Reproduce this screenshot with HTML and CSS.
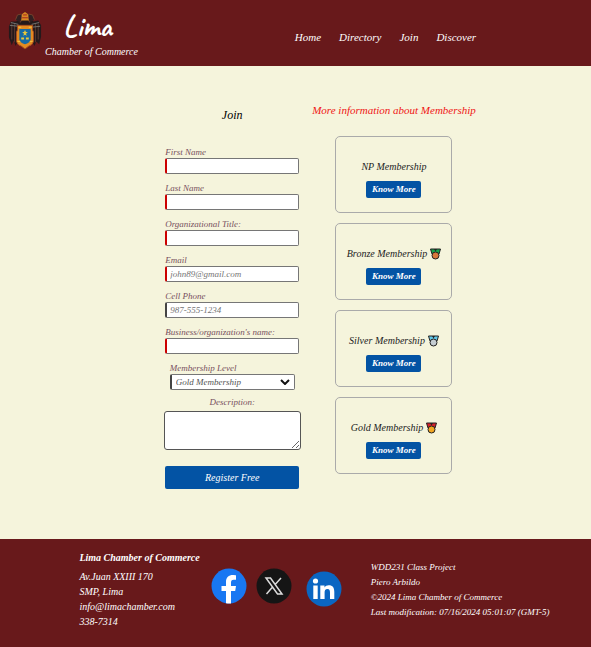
FILE: index.html
```html
<!DOCTYPE html>
<html lang="en">
<head>
<meta charset="utf-8">
<meta name="viewport" content="width=device-width, initial-scale=1">
<title>Join | Lima Chamber of Commerce</title>
<link rel="stylesheet" href="styles.css">
</head>
<body>
<header class="site-header">
  <svg class="crest" viewBox="0 0 36 40" aria-hidden="true">
    <path d="M14 8 8 10 3 10 1 15 1 27 4 35 6 30 8 36 11 30 17 35 25 30 28 36 30 31 33 34 35 26 35 14 32 9 27 10 22 7Z" fill="#24191b"/>
    <path d="M4 12v17M7 12v20M32 12v17M29 12v20" stroke="#5c3a31" stroke-width="1"/>
    <path d="m3 11 8 2M2 14l9 1M25 13l8-2M25 16l9-1" stroke="#777674" stroke-width="1"/>
    <path d="m8 8 2-5 4-1 1 5-2 4M28 8l-2-5-4-1-1 5 2 4" fill="#322022" stroke="#74432d"/>
    <path d="m14 9 1-7 3-2 3 2 1 7Z" fill="#d88a23"/>
    <path d="M16 3h4M15 6h6" stroke="#a62020"/>
    <path d="M10 14h16v5l1 2v10q-1 4-5 5l-4 3-4-3q-4-1-5-5V21l1-2Z" fill="#e38b21" stroke="#a84b1e"/>
    <path d="M12 18h12v11q-1 4-6 5-5-1-6-5Z" fill="#176aa5"/>
    <path d="m18 19 1 2h2l-2 2 1 2-2-1-2 1 1-2-2-2h2Z" fill="#e6c73c"/>
    <path d="M14 28h3m2 0h3" stroke="#e6c73c" stroke-width="2"/>
    <path d="M11 16h3m8 0h3M10 31h3m10 0h3" stroke="#f2cc48"/>
  </svg>
  <div class="brand">
    <h1 class="brand-name">Lima</h1>
    <p class="brand-sub">Chamber of Commerce</p>
  </div>
  <nav class="main-nav" aria-label="Main">
    <a href="#">Home</a>
    <a href="#">Directory</a>
    <a href="#">Join</a>
    <a href="#">Discover</a>
  </nav>
</header>

<main class="content">
  <form class="join-form" action="#">
    <h2 class="form-title">Join</h2>
    <div class="fields">
      <div class="field"><label for="first">First Name</label><input id="first" type="text" required></div>
      <div class="field"><label for="last">Last Name</label><input id="last" type="text" required></div>
      <div class="field"><label for="title">Organizational Title:</label><input id="title" type="text" required></div>
      <div class="field"><label for="email">Email</label><input id="email" type="email" placeholder="john89@gmail.com" required></div>
      <div class="field"><label for="phone">Cell Phone</label><input id="phone" type="tel" placeholder="987-555-1234"></div>
      <div class="field"><label for="business">Business/organization's name:</label><input id="business" type="text" required></div>
      <div class="field field-select">
        <label for="level">Membership Level</label>
        <div class="select-wrap">
          <select id="level">
            <option>Gold Membership</option>
            <option>Silver Membership</option>
            <option>Bronze Membership</option>
            <option>NP Membership</option>
          </select>
          <svg class="chevron" viewBox="0 0 10 6" aria-hidden="true"><path d="m1 1 4 4 4-4" fill="none" stroke="#111" stroke-width="2"/></svg>
        </div>
      </div>
    </div>
    <div class="description">
      <label for="description">Description:</label>
      <textarea id="description"></textarea>
    </div>
    <button class="register" type="submit">Register Free</button>
  </form>

  <section class="levels">
    <h2 class="levels-title">More information about Membership</h2>
    <article class="card">
      <h3>NP Membership</h3>
      <button type="button">Know More</button>
    </article>
    <article class="card">
      <h3>Bronze Membership
        <svg class="medal bronze" viewBox="0 0 11 12" aria-hidden="true"><path class="ribbon" d="M.5 1h10L9 6H2Z"/><path class="fold" d="m4 1 1.500 2.500L7 1Z"/><circle class="disc" cx="5.500" cy="7.500" r="3.500"/></svg>
      </h3>
      <button type="button">Know More</button>
    </article>
    <article class="card">
      <h3>Silver Membership
        <svg class="medal silver" viewBox="0 0 11 12" aria-hidden="true"><path class="ribbon" d="M.5 1h10L9 6H2Z"/><path class="fold" d="m4 1 1.500 2.500L7 1Z"/><circle class="disc" cx="5.500" cy="7.500" r="3.500"/></svg>
      </h3>
      <button type="button">Know More</button>
    </article>
    <article class="card">
      <h3>Gold Membership
        <svg class="medal gold" viewBox="0 0 11 12" aria-hidden="true"><path class="ribbon" d="M.5 1h10L9 6H2Z"/><path class="fold" d="m4 1 1.500 2.500L7 1Z"/><circle class="disc" cx="5.500" cy="7.500" r="3.500"/></svg>
      </h3>
      <button type="button">Know More</button>
    </article>
  </section>
</main>

<footer class="site-footer">
  <address class="contact">
    <h2>Lima Chamber of Commerce</h2>
    <p>Av.Juan XXIII 170</p>
    <p>SMP, Lima</p>
    <p>info@limachamber.com</p>
    <p>338-7314</p>
  </address>
  <div class="social">
    <a href="#" aria-label="Facebook">
      <svg viewBox="0 0 36 36"><circle cx="18" cy="18" r="17.500" fill="#1877f2"/><path d="M15 35.300V23h-4.500v-5H15v-4c0-4.700 2.700-7 6.900-7 1.500 0 3.100.3 3.100.3v4.400h-2.200c-2.200 0-2.800 1.300-2.800 2.700V18h5l-.8 5H20v12.400a18 18 0 0 1-5-.1Z" fill="#fff"/></svg>
    </a>
    <a href="#" aria-label="X">
      <svg viewBox="0 0 36 36"><circle cx="18" cy="18" r="17.500" fill="#151515"/><path d="M10 10h4.500l11.500 16h-4.500ZM25 10l-6.300 7M10.500 26l6.500-7.400" fill="none" stroke="#ddd" stroke-width="1.500"/></svg>
    </a>
    <a class="linkedin" href="#" aria-label="LinkedIn">
      <svg viewBox="0 0 36 36"><circle cx="18" cy="18" r="17.500" fill="#0a66c2"/><circle cx="9.500" cy="10" r="2.600" fill="#fff"/><path d="M7.300 14.500h4.400V28H7.300ZM14.300 14.500h4.200v1.900c.9-1.400 2.300-2.200 4.200-2.200 4.200 0 5.600 2.700 5.600 6.600V28H24v-6.200c0-2-.4-3.700-2.600-3.700s-2.800 1.600-2.800 3.700V28h-4.300Z" fill="#fff"/></svg>
    </a>
  </div>
  <div class="credits">
    <p>WDD231 Class Project</p>
    <p>Piero Arbildo</p>
    <p>©2024 Lima Chamber of Commerce</p>
    <p>Last modification: 07/16/2024 05:01:07 (GMT-5)</p>
  </div>
</footer>
</body>
</html>
```
FILE: styles.css
```css
:root {
  --maroon: #68191b;
  --cream: #f5f4dc;
  --blue: #0353a4;
  --serif: "Liberation Serif", serif;
}

* { box-sizing: border-box; }

body {
  margin: 0;
  min-height: 100vh;
  display: flex;
  flex-direction: column;
  background: var(--cream);
  color: #222;
  font: italic 10px/15px var(--serif);
}

h1, h2, h3, p { margin: 0; }
a { color: inherit; text-decoration: none; }
button, input, select, textarea { font: inherit; }

button {
  border: 0;
  border-radius: 2px;
  background: var(--blue);
  color: #fff;
  cursor: pointer;
}

.site-header {
  display: flex;
  align-items: flex-start;
  padding: 8px;
  background: var(--maroon);
  color: #fff;
}

.crest { width: 34px; height: 38px; margin-top: 4px; }
.brand { margin-left: 3px; text-align: center; }
.brand-name { padding-right: 8px; font: normal 700 30px/36px Caveat, cursive; }
.brand-sub { font-size: 10px; line-height: 16px; }

.site-header { padding-bottom: 6px; }

.main-nav {
  display: flex;
  gap: 18px;
  margin: 22px auto 0;
  padding-left: 50px;
  font-size: 11px;
}

.content {
  flex: 1;
  display: flex;
  justify-content: center;
  gap: 13px;
  padding: 36px 0 49px 50px;
}

.join-form {
  display: flex;
  flex-direction: column;
  align-items: center;
  width: 134px;
}

.form-title { margin-top: 4px; font-size: 12px; line-height: 18px; color: #000; font-weight: 400; }

.fields {
  display: flex;
  flex-direction: column;
  align-items: center;
  gap: 8px;
  width: 100%;
  margin-top: 22px;
}

.field { display: flex; flex-direction: column; width: 100%; }
.field-select { width: 125px; }
label { font-size: 9px; line-height: 12px; color: #785060; }

input, select {
  width: 100%;
  height: 16px;
  padding: 0 3px;
  border: 1px solid #767676;
  border-left: 2px solid #444;
  border-radius: 2px;
  background: #fff;
  color: #555;
  font-size: 9px;
}

input:required { border-left-color: #c00; }
::placeholder { color: #757575; }

.select-wrap { position: relative; }
select { display: block; padding: 0 4px; appearance: none; }
.chevron { position: absolute; right: 5px; top: 5px; width: 10px; height: 6px; pointer-events: none; }

.description {
  display: flex;
  flex-direction: column;
  align-items: center;
  gap: 3px;
  margin-top: 6px;
}

textarea {
  width: 137px;
  height: 39px;
  border: 1px solid #555;
  border-radius: 3px;
  background: #fff;
}

.register { width: 100%; height: 23px; margin-top: 16px; font-size: 10px; }

.levels { display: flex; flex-direction: column; align-items: center; gap: 10px; }
.levels-title { margin-bottom: 8px; font-size: 11px; line-height: 16px; font-weight: 400; color: #f01414; }

.card {
  display: flex;
  flex-direction: column;
  align-items: center;
  gap: 6px;
  width: 117px;
  padding: 22px 0 14px;
  border: 1px solid #aaa;
  border-radius: 5px;
}

.card h3 {
  display: flex;
  align-items: center;
  gap: 3px;
  font-size: 10px;
  line-height: 16px;
  font-weight: 400;
}

.card button { width: 55px; height: 17px; padding: 0; font-size: 9px; font-weight: 700; }

.medal { width: 11px; height: 12px; stroke: #222; stroke-width: 1; }
.fold { fill: #222; stroke: none; }
.bronze .ribbon { fill: #16a34a; }
.bronze .disc { fill: #d9783b; }
.silver .ribbon { fill: #62c8e8; }
.silver .disc { fill: #c5cdd2; }
.gold .ribbon { fill: #d3202a; }
.gold .disc { fill: #f3a722; }

.site-footer {
  display: flex;
  justify-content: center;
  padding: 11px 0 18px 38px;
  background: var(--maroon);
  color: #fff;
}

.contact h2 { margin-bottom: 4px; font-size: 10px; line-height: 15px; }
.social { display: flex; gap: 9px; margin: 18px 29px 0 11px; }
.social svg { display: block; width: 36px; height: 36px; }
.linkedin { margin: 3px 0 0 5px; }
.credits { margin-top: 10px; font-size: 9px; }
```
